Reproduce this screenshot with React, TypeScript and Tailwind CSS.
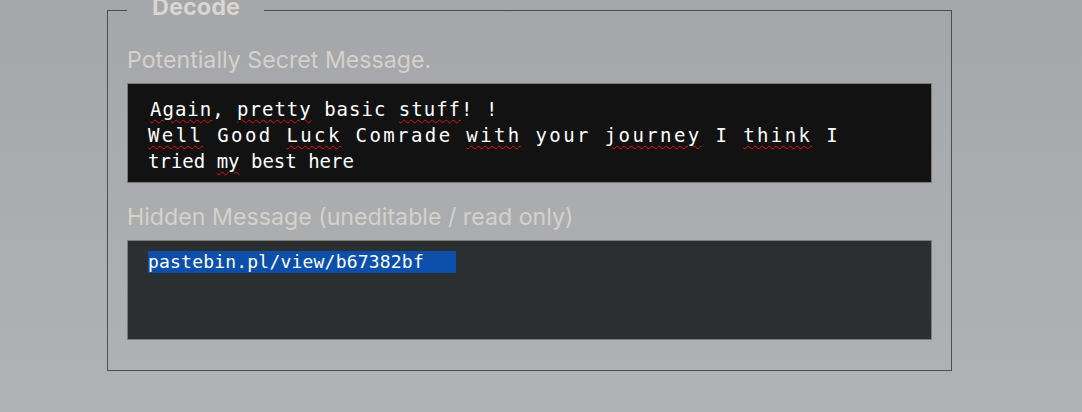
import React from 'react';

const mono = { fontFamily: '"DejaVu Sans Mono", "Liberation Mono", monospace' };

function Typo({ children }: { children: React.ReactNode }) {
  return (
    <span className="underline decoration-wavy decoration-[#e01010] decoration-1 underline-offset-[3px]">
      {children}
    </span>
  );
}

export default function App() {
  return (
    <div
      className="h-[412px] w-full overflow-hidden bg-linear-to-b from-[#a5a6a9] to-[#b1b2b4]"
      style={{ fontFamily: 'Inter, "Noto Sans", sans-serif' }}
    >
      <fieldset className="ml-[107px] w-[845px] border border-[#4b4e56] px-[19px] pb-[30px]">
        <legend className="pl-[25px] pr-[24px] text-[23.5px] font-bold leading-5 text-[#d9d5d0]">
          <span className="relative -top-[3px]">Decode</span>
        </legend>

        <div className="mt-[26px] text-[23.2px] leading-7 text-[#d5d1cb]">
          Potentially Secret Message.
        </div>
        <div
          className="mt-[9px] h-[100px] border border-[#7f7b74] bg-[#121212] pl-5 pt-3 text-[19px] leading-[26px] text-white whitespace-pre"
          style={mono}
        >
          <div className="ml-[2px] tracking-[1px]">
            <Typo>Again</Typo>, <Typo>pretty</Typo> basic <Typo>stuff</Typo>! !
          </div>
          <div className="tracking-[2.4px]">
            <Typo>Well</Typo> Good <Typo>Luck</Typo> Comrade <Typo>with</Typo> your{' '}
            <Typo>journey</Typo> I <Typo>think</Typo> I
          </div>
          <div>
            tried <Typo>my</Typo> best here
          </div>
        </div>

        <div className="mt-[20px] text-[23.2px] leading-7 text-[#d5d1cb]">
          Hidden Message (uneditable / read only)
        </div>
        <div
          className="mt-[9px] h-[100px] border border-[#7f7b74] bg-[#2b2f32] pl-5 pt-[10px] text-[18px] leading-[22px] text-white"
          style={mono}
        >
          <span className="inline-block h-[22px] w-[308px] bg-[#0b4fab] tracking-[0.2px]">
            pastebin.pl/view/b67382bf
          </span>
        </div>
      </fieldset>
    </div>
  );
}
